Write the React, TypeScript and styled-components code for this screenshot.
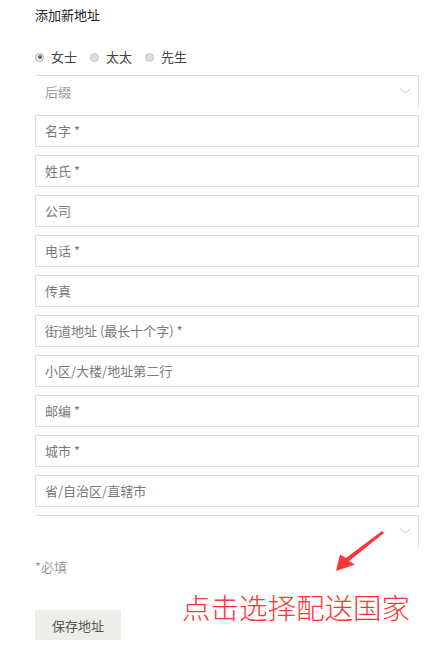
import { FC } from "react";
import styled, { createGlobalStyle } from "styled-components";

const GlobalStyle = createGlobalStyle`
  html, body {
    margin: 0;
    padding: 0;
    background: #fff;
  }
  body {
    font-family: "Noto Sans CJK SC", "Liberation Sans", sans-serif;
    font-size: 13px;
    color: #333;
  }
`;

const Page = styled.div`
  position: relative;
  width: 448px;
  height: 645px;
  padding: 5px 0 0 35px;
  box-sizing: border-box;
`;

const Form = styled.div`
  width: 384px;
  display: flex;
  flex-direction: column;
`;

const Title = styled.div`
  line-height: 20px;
  color: #222;
`;

const RadioRow = styled.div`
  display: flex;
  align-items: center;
  gap: 13px;
  margin-top: 22px;
  height: 20px;
`;

const RadioItem = styled.label`
  display: flex;
  align-items: center;
  gap: 7px;
  color: #444;
  line-height: 20px;
`;

const RadioDot = styled.span<{ $checked?: boolean }>`
  width: 9px;
  height: 9px;
  border-radius: 50%;
  box-sizing: border-box;
  border: 1px solid ${(p) => (p.$checked ? "#a8a8a8" : "#c4c4c4")};
  background: ${(p) => (p.$checked ? "#f2f2f2" : "#dedede")};
  display: flex;
  align-items: center;
  justify-content: center;

  &::after {
    content: "";
    display: ${(p) => (p.$checked ? "block" : "none")};
    width: 4px;
    height: 4px;
    border-radius: 50%;
    background: #666;
  }
`;

const Fields = styled.div`
  display: flex;
  flex-direction: column;
  gap: 8px;
  margin-top: 8px;
`;

const Field = styled.div`
  height: 32px;
  box-sizing: border-box;
  border: 1px solid #dcdcdc;
  padding: 0 9px 1px;
  display: flex;
  align-items: center;
  color: #7a7a7a;
`;

const Select = styled.div`
  height: 32px;
  box-sizing: border-box;
  border-top: 1px solid #dcdcdc;
  border-right: 1px solid #dcdcdc;
  padding: 0 7px 1px 10px;
  display: flex;
  align-items: center;
  justify-content: space-between;
  color: #9a9a9a;
`;

const Note = styled.div`
  margin-top: 10px;
  line-height: 20px;
  color: #999;
`;

const SaveButton = styled.button`
  margin-top: 33px;
  width: 86px;
  height: 30px;
  border: none;
  background: #eeede9;
  color: #555;
  font-family: inherit;
  font-size: 13px;
  padding: 0;
`;

const Annotation = styled.div`
  position: absolute;
  left: 182px;
  top: 591px;
  font-size: 28.5px;
  line-height: 32px;
  color: #ff3434;
  font-weight: 300;
  white-space: nowrap;
`;

const Arrow = styled.svg`
  position: absolute;
  left: 330px;
  top: 525px;
`;

const Chevron: FC = () => (
  <svg width="11" height="6" viewBox="0 0 11 6">
    <polyline points="0.5,0.5 5.5,5 10.5,0.5" fill="none" stroke="#c4c4c4" strokeWidth="1" />
  </svg>
);

const fields = [
  "名字 *",
  "姓氏 *",
  "公司",
  "电话 *",
  "传真",
  "街道地址 (最长十个字) *",
  "小区/大楼/地址第二行",
  "邮编 *",
  "城市 *",
  "省/自治区/直辖市",
];

const App: FC = () => {
  return (
    <Page>
      <GlobalStyle />
      <Form>
        <Title>添加新地址</Title>
        <RadioRow>
          <RadioItem>
            <RadioDot $checked />
            女士
          </RadioItem>
          <RadioItem>
            <RadioDot />
            太太
          </RadioItem>
          <RadioItem>
            <RadioDot />
            先生
          </RadioItem>
        </RadioRow>
        <Fields>
          <Select>
            <span>后缀</span>
            <Chevron />
          </Select>
          {fields.map((f) => (
            <Field key={f}>{f}</Field>
          ))}
          <Select>
            <span />
            <Chevron />
          </Select>
        </Fields>
        <Note>*必填</Note>
        <div>
          <SaveButton>保存地址</SaveButton>
        </div>
      </Form>
      <Arrow width="60" height="52" viewBox="0 0 60 52">
        <polygon points="52,6 54,8 19,36 25,39.5 6,46 10,29.5 16,33" fill="#ff3434" />
      </Arrow>
      <Annotation>点击选择配送国家</Annotation>
    </Page>
  );
};

export default App;
